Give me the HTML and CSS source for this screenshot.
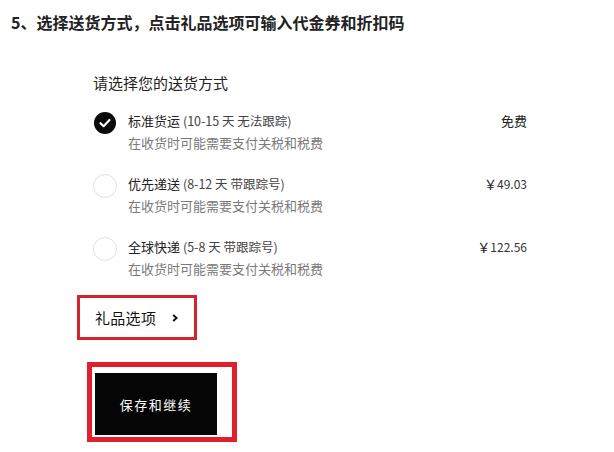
FILE: index.html
```html
<!DOCTYPE html>
<html lang="zh-CN">
<head>
<meta charset="utf-8">
<link rel="stylesheet" href="styles.css">
</head>
<body>
<h1 class="title">5、选择送货方式，点击礼品选项可输入代金券和折扣码</h1>
<div class="content">
  <div class="heading">请选择您的送货方式</div>
  <div class="options">
    <div class="option">
      <span class="radio checked"><svg viewBox="0 0 22 22" width="22" height="22"><polyline points="6.5,11.2 9.6,14.2 15.5,8" fill="none" stroke="#fff" stroke-width="2.2" stroke-linecap="round" stroke-linejoin="round"/></svg></span>
      <div class="info">
        <div class="line"><span class="name">标准货运 <span class="note">(10-15 天 无法跟踪)</span></span><span class="price">免费</span></div>
        <div class="sub">在收货时可能需要支付关税和税费</div>
      </div>
    </div>
    <div class="option">
      <span class="radio"></span>
      <div class="info">
        <div class="line"><span class="name">优先递送 <span class="note">(8-12 天 带跟踪号)</span></span><span class="price">￥<span class="num">49.03</span></span></div>
        <div class="sub">在收货时可能需要支付关税和税费</div>
      </div>
    </div>
    <div class="option">
      <span class="radio"></span>
      <div class="info">
        <div class="line"><span class="name">全球快递 <span class="note">(5-8 天 带跟踪号)</span></span><span class="price">￥<span class="num">122.56</span></span></div>
        <div class="sub">在收货时可能需要支付关税和税费</div>
      </div>
    </div>
  </div>
  <div class="gift-mark">
    <span class="gift-label">礼品选项</span>
    <svg class="chev" viewBox="0 0 6 8" width="6" height="8"><polyline points="1.2,1 4.6,4 1.2,7" fill="none" stroke="#111" stroke-width="2"/></svg>
  </div>
  <div class="btn-mark">
    <button class="save">保存和继续</button>
  </div>
</div>
</body>
</html>
```
FILE: styles.css
```css
* { box-sizing: border-box; }
html, body { margin: 0; padding: 0; background: #fff; }
body {
  font-family: "Noto Sans CJK SC", "Microsoft YaHei", "Noto Sans", sans-serif;
  color: #1a1a1a;
  width: 614px;
  height: 452px;
  overflow: hidden;
}
.title {
  margin: 0;
  padding: 12px 0 0 11px;
  font-size: 16px;
  line-height: 20px;
  font-weight: 700;
  color: #222;
}
.content {
  margin-left: 93px;
  width: 434px;
  padding-top: 41px;
}
.heading {
  font-size: 15px;
  line-height: 20px;
  color: #222;
}
.options {
  margin-top: 18px;
  display: flex;
  flex-direction: column;
  gap: 19px;
}
.option {
  display: flex;
  align-items: flex-start;
  gap: 11px;
}
.radio {
  flex: none;
  width: 24px;
  height: 24px;
  border-radius: 50%;
  border: 1px solid #e0e0e0;
  display: flex;
  align-items: center;
  justify-content: center;
}
.radio.checked {
  width: 22px;
  height: 22px;
  margin: 1px 1px 0 1px;
  border: none;
  background: #0a0a0a;
}
.info { flex: 1; }
.line {
  display: flex;
  justify-content: space-between;
  font-size: 13px;
  line-height: 20px;
  color: #222;
}
.note { color: #444; font-size: 12.5px; }
.price { color: #222; }
.price .num { color: #333; font-size: 12px; }
.sub {
  font-size: 13px;
  line-height: 24px;
  color: #7a7a7a;
}
.gift-mark {
  margin-top: 14px;
  margin-left: -16px;
  width: 120px;
  height: 45px;
  border: 3px solid #d3232f;
  display: flex;
  align-items: center;
  padding-left: 15px;
  gap: 16px;
}
.gift-label {
  font-size: 15px;
  color: #111;
  letter-spacing: 0.3px;
}
.btn-mark {
  margin-top: 22px;
  margin-left: -6px;
  width: 150px;
  height: 80px;
  border: 5px solid #e0202d;
  padding: 6px 0 0 3px;
}
.save {
  width: 122px;
  height: 62px;
  background: #050505;
  color: #fff;
  border: none;
  font-family: inherit;
  font-size: 13px;
  letter-spacing: 1.5px;
  padding: 0;
}
```
